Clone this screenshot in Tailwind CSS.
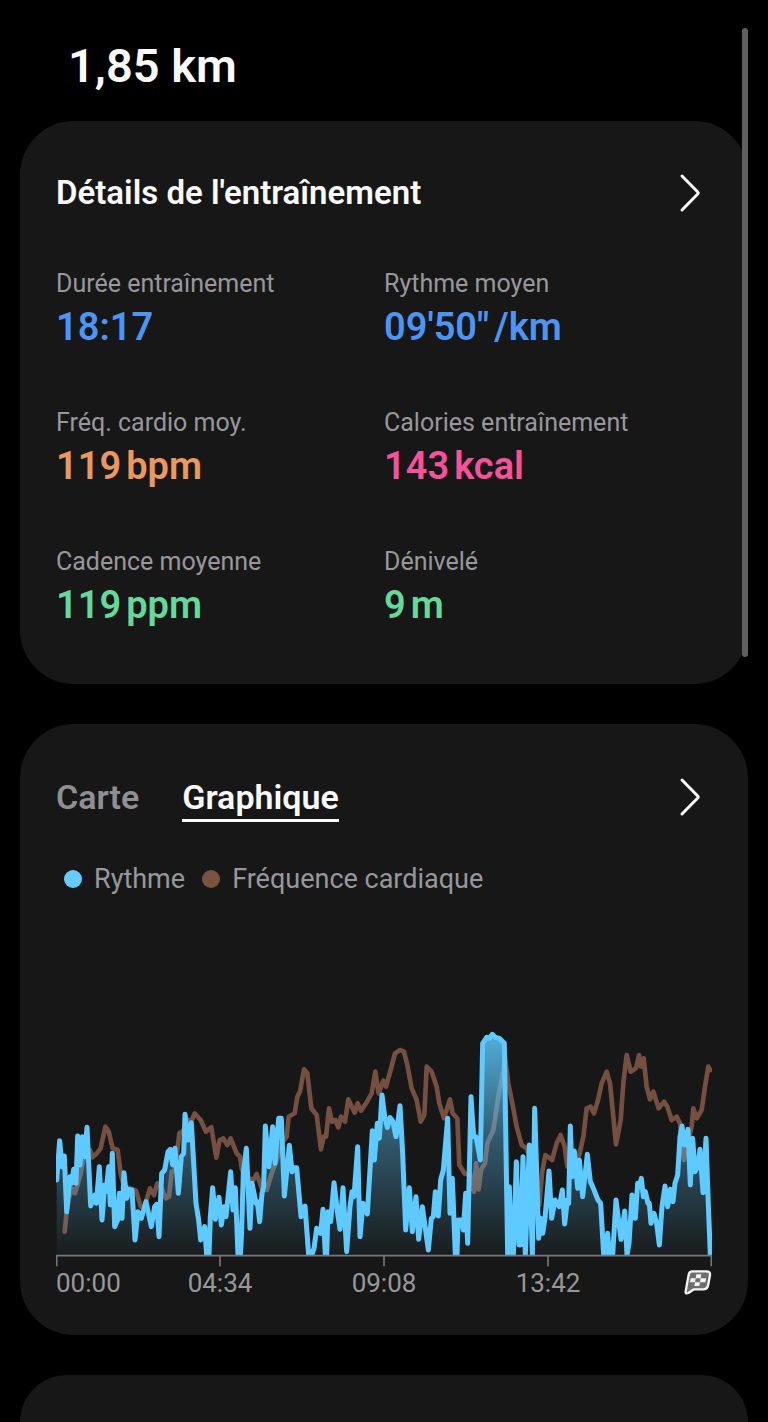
<!doctype html>
<html lang="fr">
<head>
  <meta charset="UTF-8">
  <meta name="viewport" content="width=device-width, initial-scale=1.0">
  <title>Entraînement</title>
  <script src="https://cdn.jsdelivr.net/npm/@tailwindcss/browser@4"></script>
</head>
<body class="bg-black text-[#fafafa] font-['Roboto','Liberation_Sans',sans-serif]">
  <div class="min-h-screen flex flex-col px-5">
    <!-- Distance -->
    <header class="pt-9 pb-[25px] px-12">
      <h1 class="text-[47px] leading-[60px] font-semibold">1,85 km</h1>
    </header>

    <main class="flex-1 flex flex-col gap-10">
      <!-- Détails -->
      <section class="bg-[#171717] rounded-[54px] px-9 pt-12 pb-[55px]">
        <div class="flex items-center justify-between h-12 mb-[51px]">
          <h2 class="text-[33px] leading-[48px] font-semibold">Détails de l'entraînement</h2>
          <button type="button" aria-label="Voir les détails" class="mr-[10px] cursor-pointer">
            <svg class="w-6 h-10" viewBox="0 0 24 40" fill="none" stroke="currentColor" stroke-width="3" stroke-linecap="round" stroke-linejoin="round">
              <path d="M4 3 L19.500 18.700 Q20.800 20 19.500 21.300 L4 37"/>
            </svg>
          </button>
        </div>
        <dl class="grid grid-cols-2 gap-y-14">
          <div class="flex flex-col gap-[3px]">
            <dt class="text-[25px] leading-8 text-[#98979c]">Durée entraînement</dt>
            <dd class="text-[38px] leading-[48px] font-semibold text-[#4b95f5]">18:17</dd>
          </div>
          <div class="flex flex-col gap-[3px]">
            <dt class="text-[25px] leading-8 text-[#98979c]">Rythme moyen</dt>
            <dd class="flex gap-[5px] text-[38px] leading-[48px] font-semibold text-[#4b95f5]"><span>09'50"</span><span>/km</span></dd>
          </div>
          <div class="flex flex-col gap-[3px]">
            <dt class="text-[25px] leading-8 text-[#98979c]">Fréq. cardio moy.</dt>
            <dd class="flex gap-[5px] text-[38px] leading-[48px] font-semibold text-[#ea985c]"><span>119</span><span>bpm</span></dd>
          </div>
          <div class="flex flex-col gap-[3px]">
            <dt class="text-[25px] leading-8 text-[#98979c]">Calories entraînement</dt>
            <dd class="flex gap-[5px] text-[38px] leading-[48px] font-semibold text-[#f5529b]"><span>143</span><span>kcal</span></dd>
          </div>
          <div class="flex flex-col gap-[3px]">
            <dt class="text-[25px] leading-8 text-[#98979c]">Cadence moyenne</dt>
            <dd class="flex gap-[5px] text-[38px] leading-[48px] font-semibold text-[#66d99a]"><span>119</span><span>ppm</span></dd>
          </div>
          <div class="flex flex-col gap-[3px]">
            <dt class="text-[25px] leading-8 text-[#98979c]">Dénivelé</dt>
            <dd class="flex gap-[5px] text-[38px] leading-[48px] font-semibold text-[#66d99a]"><span>9</span><span>m</span></dd>
          </div>
        </dl>
      </section>

      <!-- Graphique -->
      <section class="bg-[#171717] rounded-[54px] px-9 pt-12 pb-9">
        <div class="flex items-center justify-between mb-[37px]">
          <div class="flex gap-[43px]" role="tablist">
            <button type="button" role="tab" aria-selected="false" class="pt-[3px] text-[34px] leading-[44px] font-semibold text-[#8f8e93] border-b-3 border-transparent cursor-pointer">Carte</button>
            <button type="button" role="tab" aria-selected="true" class="pt-[3px] text-[34px] leading-[44px] font-semibold border-b-3 border-[#fafafa] cursor-pointer">Graphique</button>
          </div>
          <button type="button" aria-label="Ouvrir le graphique" class="mr-[10px] cursor-pointer">
            <svg class="w-6 h-10" viewBox="0 0 24 40" fill="none" stroke="currentColor" stroke-width="3" stroke-linecap="round" stroke-linejoin="round">
              <path d="M4 3 L19.500 18.700 Q20.800 20 19.500 21.300 L4 37"/>
            </svg>
          </button>
        </div>

        <ul class="flex gap-[17px] pl-2 text-[27px] leading-10 text-[#98979c] mb-[121px]">
          <li class="flex items-center gap-3"><span class="size-[18px] rounded-full bg-[#66ccff]"></span>Rythme</li>
          <li class="flex items-center gap-3"><span class="size-[18px] rounded-full bg-[#7a5343]"></span>Fréquence cardiaque</li>
        </ul>

        <svg class="block w-full" viewBox="0 0 1968 741" fill="none" stroke-linecap="round" stroke-linejoin="round">
          <defs>
            <linearGradient id="fade" gradientUnits="userSpaceOnUse" x1="0" y1="40" x2="0" y2="705">
              <stop offset="0" stop-color="#5ecaff" stop-opacity=".85"/>
              <stop offset=".5" stop-color="#5ecaff" stop-opacity=".35"/>
              <stop offset="1" stop-color="#5ecaff" stop-opacity=".03"/>
            </linearGradient>
            <clipPath id="plot"><rect x="0" y="0" width="1968" height="705"/></clipPath>
          </defs>
          <g clip-path="url(#plot)">
            <polyline id="heart" stroke="#754f40" stroke-width="14"/>
            <polygon id="paceArea" fill="url(#fade)"/>
            <polyline id="paceLine" stroke="#5ecaff" stroke-width="15"/>
          </g>
          <path d="M2 739V707H1966V739M492 707V739M984 707V739M1476 707V739" stroke="#77777a" stroke-width="5" stroke-linecap="butt" stroke-linejoin="miter"/>
        </svg>
        <div class="flex text-[26px] leading-8 text-[#98979c]">
          <span class="w-1/8">00:00</span>
          <span class="w-1/4 text-center">04:34</span>
          <span class="w-1/4 text-center">09:08</span>
          <span class="w-1/4 text-center">13:42</span>
          <span class="w-1/8 flex justify-end items-center">
            <svg class="w-7 h-[26px]" viewBox="0 0 84 78" role="img" aria-label="Arrivée">
              <path d="M24 4H67Q80 4 78 16L72 47Q69 58 58 58H30L13 69Q3 73 5 64L14 14Q16 4 24 4Z" fill="#6e6e6e" stroke="#f5f5f5" stroke-width="7" stroke-linejoin="round"/>
              <path d="M37 13H52L50 25H35ZM20 25H35L33 37H18ZM50 25H66L64 37H48ZM33 37H48L46 48H31Z" fill="#f5f5f5"/>
            </svg>
          </span>
        </div>
      </section>

      <!-- Carte suivante -->
      <section class="flex-1 min-h-[47px] bg-[#171717] rounded-t-[54px]"></section>
    </main>
  </div>

  <!-- Barre de défilement -->
  <div class="fixed top-7 right-5 w-[6px] h-[629px] rounded-full bg-[#5f5f5f]"></div>

  <script>
    // Rythme : x,y dans le repère du graphique
    const pace = `2,480 11,362 18,440 25,408 32,575 42,470 47,490 53,448 60,490 65,348 72,435 79,350 86,410 93,322
      104,558 116,525 121,550 130,440 138,600 146,495 150,515 158,440 163,555 169,400 176,620 185,600 190,520 198,595
      204,458 212,535 218,508 228,510 237,660 246,575 256,595 270,545 286,620 296,560 302,553 309,650 317,460 326,450
      336,395 343,388 350,435 357,385 367,520 376,410 383,400 387,283 396,360 406,308 420,550 428,600 434,660 446,620
      452,705 459,705 463,590 470,503 478,598 489,532 496,615 504,560 510,590 524,455 531,570 538,503 546,705 553,705
      556,655 562,460 571,385 582,625 588,490 600,550 604,545 611,605 618,520 623,500 628,318 639,440 650,320 657,430
      668,295 676,295 685,528 700,376 708,455 714,443 722,443 735,590 747,558 758,705 767,705 774,685 782,625 794,640
      801,568 808,705 812,705 816,575 824,605 834,488 845,580 852,628 861,503 872,695 882,560 888,515 894,530 905,380
      912,650 921,550 934,582 949,332 955,420 964,310 970,355 978,225 986,290 994,322 1002,293 1010,303 1020,350
      1032,257 1040,400 1049,630 1060,503 1069,635 1080,530 1088,658 1099,560 1117,690 1126,595 1132,590 1138,515
      1147,588 1154,480 1162,450 1175,295 1182,580 1189,475 1198,705 1203,705 1206,600 1217,600 1222,630 1229,520
      1235,670 1245,230 1253,350 1260,350 1273,420 1280,70 1292,52 1300,55 1309,43 1318,52 1330,55 1345,70 1355,705
      1360,500 1366,705 1372,705 1381,425 1389,675 1394,675 1401,410 1408,705 1420,375 1429,705 1436,265 1448,655
      1454,595 1460,640 1467,595 1479,453 1487,595 1497,540 1510,560 1519,510 1526,612 1534,540 1538,550 1543,318
      1548,470 1555,393 1565,505 1570,420 1580,530 1594,403 1603,485 1610,500 1626,540 1634,550 1643,705 1649,705
      1655,640 1660,705 1670,705 1680,540 1695,658 1706,573 1713,705 1719,670 1728,525 1738,595 1745,490 1750,500
      1756,475 1762,530 1768,515 1776,550 1780,550 1785,610 1794,580 1802,610 1810,675 1818,560 1827,498 1835,560
      1843,508 1851,545 1857,490 1865,465 1872,350 1878,318 1885,375 1896,328 1903,495 1910,355 1917,455 1925,440
      1932,388 1941,518 1950,355 1956,530 1963,705`;

    // Fréquence cardiaque
    const heart = `26,635 32,575 40,530 48,505 57,520 72,470 87,395 102,390 110,412 122,400 134,385 148,320 158,335
      170,385 185,390 194,460 204,500 222,505 240,512 254,560 267,555 282,505 294,525 304,490 317,505 330,535 339,530
      347,455 357,450 370,340 384,330 397,300 408,300 416,280 434,300 450,335 466,322 481,413 491,360 502,355 514,375
      524,355 542,400 552,410 558,450 577,475 592,480 602,462 617,505 632,510 647,460 662,420 677,370 692,350 698,290
      716,280 724,230 732,215 744,148 754,160 766,265 782,285 795,388 803,350 810,350 819,265 828,305 838,300 847,322
      855,290 867,305 877,238 896,278 905,250 915,272 930,250 947,220 958,155 968,220 982,182 990,200 1004,150
      1017,100 1032,90 1044,95 1054,135 1067,205 1082,240 1094,305 1105,285 1112,140 1127,155 1142,200 1150,250
      1164,295 1182,238 1190,280 1204,295 1210,435 1227,462 1242,460 1254,515 1260,430 1268,508 1275,450 1287,430
      1294,370 1312,330 1327,230 1342,150 1347,110 1357,190 1367,240 1382,320 1397,375 1412,385 1427,430 1442,500
      1450,555 1458,460 1468,405 1488,420 1502,370 1514,345 1526,380 1534,440 1552,440 1570,405 1582,350 1592,265
      1604,260 1614,280 1626,240 1637,190 1652,155 1662,190 1672,290 1680,373 1694,300 1702,190 1712,105 1724,155
      1740,145 1749,105 1755,140 1763,115 1772,200 1782,238 1792,215 1808,265 1824,245 1834,260 1847,300 1862,290
      1872,310 1884,420 1897,360 1907,320 1912,265 1922,295 1937,270 1947,200 1957,140 1963,150`;

    document.getElementById("heart").setAttribute("points", heart)
    document.getElementById("paceLine").setAttribute("points", pace)
    // ferme la zone sur l'axe
    document.getElementById("paceArea").setAttribute("points", pace + " 2,705")
  </script>
</body>
</html>
